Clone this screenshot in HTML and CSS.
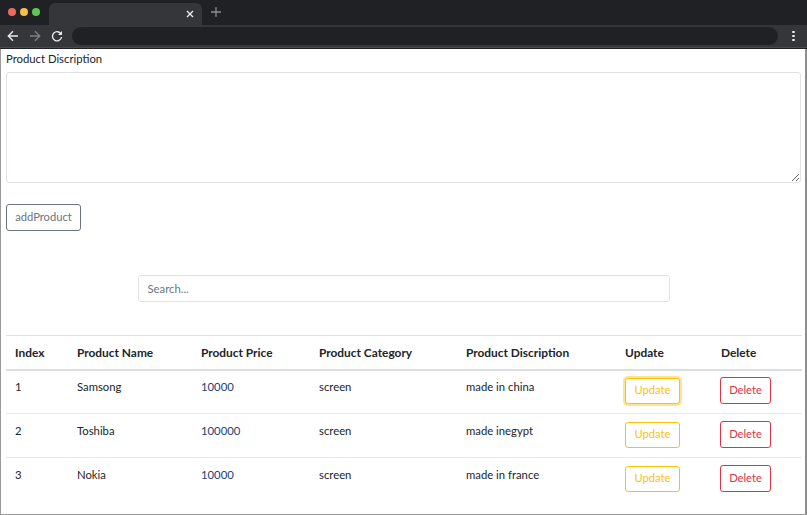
FILE: index.html
```html
<!DOCTYPE html>
<html>
<head>
<meta charset="utf-8">
<link rel="stylesheet" href="styles.css">
</head>
<body>
<div class="chrome">
  <div class="tabbar">
    <div class="lights"><span class="light red"></span><span class="light yellow"></span><span class="light green"></span></div>
    <div class="tab"><span class="tab-close">
      <svg width="8" height="8" viewBox="0 0 8 8"><path d="M1 1L7 7M7 1L1 7" stroke="#e8eaed" stroke-width="1.4"/></svg></span></div>
    <div class="newtab"><svg width="10" height="10" viewBox="0 0 10 10"><path d="M5 0V10M0 5H10" stroke="#8a8d91" stroke-width="1.3"/></svg></div>
  </div>
  <div class="toolbar">
    <svg class="navicon" width="12" height="12" viewBox="0 0 12 12"><path d="M11 6H1.5M6 1.2L1.3 6L6 10.8" stroke="#e8eaed" stroke-width="1.4" fill="none"/></svg>
    <svg class="navicon" width="12" height="12" viewBox="0 0 12 12"><path d="M1 6H10.5M6 1.2L10.7 6L6 10.8" stroke="#7d8084" stroke-width="1.4" fill="none"/></svg>
    <svg class="navicon" width="12" height="12" viewBox="0 0 12 12"><path d="M10.2 4.2A4.6 4.6 0 1 0 10.6 7.2" stroke="#e8eaed" stroke-width="1.4" fill="none"/><path d="M11 1V5H7Z" fill="#e8eaed"/></svg>
    <div class="omnibox"></div>
    <div class="menu"><span></span><span></span><span></span></div>
  </div>
</div>
<div class="page">
  <label class="form-label" for="desc">Product Discription</label>
  <textarea id="desc" class="form-control area"></textarea>
  <div class="btn-row"><button class="btn btn-secondary-outline">addProduct</button></div>
  <div class="search-row"><input class="form-control search" type="text" placeholder="Search..."></div>
  <table class="table">
    <colgroup>
      <col style="width:62px"><col style="width:124px"><col style="width:118px"><col style="width:147px"><col style="width:159px"><col style="width:96px"><col>
    </colgroup>
    <thead>
      <tr><th>Index</th><th>Product Name</th><th>Product Price</th><th>Product Category</th><th>Product Discription</th><th>Update</th><th>Delete</th></tr>
    </thead>
    <tbody>
      <tr><td>1</td><td>Samsong</td><td class="price">10000</td><td>screen</td><td>made in china</td><td><button class="btn btn-warn focus">Update</button></td><td><button class="btn btn-danger-outline">Delete</button></td></tr>
      <tr><td>2</td><td>Toshiba</td><td class="price">100000</td><td>screen</td><td>made inegypt</td><td><button class="btn btn-warn">Update</button></td><td><button class="btn btn-danger-outline">Delete</button></td></tr>
      <tr class="last"><td>3</td><td>Nokia</td><td class="price">10000</td><td>screen</td><td>made in france</td><td><button class="btn btn-warn">Update</button></td><td><button class="btn btn-danger-outline">Delete</button></td></tr>
    </tbody>
  </table>
</div>
</body>
</html>
```
FILE: styles.css
```css
* { box-sizing: border-box; }
html, body { margin: 0; padding: 0; }
body {
  width: 807px;
  height: 515px;
  overflow: hidden;
  background: #ffffff;
  font-family: "Lato", "Noto Sans", sans-serif;
  color: #212529;
}
.chrome { background: #202124; height: 49px; }
.tabbar { height: 25px; display: flex; align-items: flex-end; position: relative; }
.lights { display: flex; gap: 4px; padding: 0 0 0 8px; height: 25px; align-items: center; padding-bottom: 2px; width: 49px; }
.light { width: 8px; height: 8px; border-radius: 50%; display: block; }
.red { background: #ed6a5e; }
.yellow { background: #f5bf4f; }
.green { background: #61c554; }
.tab {
  width: 153px; height: 22px; background: #35363a;
  border-radius: 6px 6px 0 0;
  display: flex; align-items: center; justify-content: flex-end; padding-right: 8px;
}
.tab-close { display: flex; }
.newtab { height: 25px; display: flex; align-items: center; padding-left: 9px; padding-bottom: 1px; }
.toolbar {
  height: 23px; background: #35363a; display: flex; align-items: center;
  padding-left: 7px; gap: 10px; border-bottom: 1px solid #4a4b4f;
}
.navicon { flex: none; }
.omnibox { flex: none; margin-left: -1px; width: 706px; height: 18px; background: #202124; border-radius: 9px; }
.menu { display: flex; flex-direction: column; gap: 1.5px; margin-left: 4px; }
.menu span { width: 2.5px; height: 2.5px; background: #e8eaed; display: block; border-radius: 50%; }

.page {
  height: 466px;
  border-left: 1px solid #9a9a9a;
  border-right: 2px solid #8d8d8d;
  border-bottom: 1px solid #9a9a9a;
  padding: 0 4px 0 5px;
  font-size: 11.3px;
  line-height: 19px;
}
.form-label { display: block; height: 19px; margin-bottom: 4px; color: #212529; }
.form-control {
  display: block; width: 100%;
  border: 1px solid #dfe2e6; border-radius: 3px;
  font-family: inherit; font-size: 11.3px; color: #212529; background: #fff;
}
.area { height: 111px; resize: vertical; margin: 0; padding: 5px 9px; }
.btn-row { padding-top: 21px; }
.btn {
  font-family: inherit; font-size: 11.2px; line-height: 1.5;
  background: #fff; border-radius: 3px; cursor: pointer;
}
.btn-secondary-outline {
  height: 27px; width: 75px; padding: 0;
  border: 1px solid #6c757d; color: #6c757d;
}
.search-row { padding: 44px 0 0 0; display: flex; justify-content: center; }
.search { width: 532px; height: 27px; padding: 0 9px; }
.search::placeholder { color: #6c757d; }

.table { width: 796px; border-collapse: collapse; margin-top: 33px; table-layout: fixed; }
.table th, .table td { text-align: left; padding: 0 0 0 9px; vertical-align: middle; }
.table th { height: 34px; font-size: 11.9px; font-weight: 700; border-top: 1px solid #dee2e6; border-bottom: 2px solid #dcdfe2; padding-top: 0; }
.table td { height: 44px; border-bottom: 1px solid #e6e8ea; padding-bottom: 10px; }
.table tr.last td { border-bottom: none; }
.table td.price { color: #1c3d78; }
.table td:nth-child(6), .table td:nth-child(7) { padding-bottom: 2px; }
.btn-warn { width: 55px; height: 26px; padding: 0; border: 1px solid #ffc107; color: #ffc107; }
.btn-warn.focus { box-shadow: 0 0 0 2px rgba(255, 193, 7, 0.45); }
.btn-danger-outline { width: 51px; height: 27px; padding: 0; border: 1px solid #dc3545; color: #dc3545; margin-left: -1px; }
```
